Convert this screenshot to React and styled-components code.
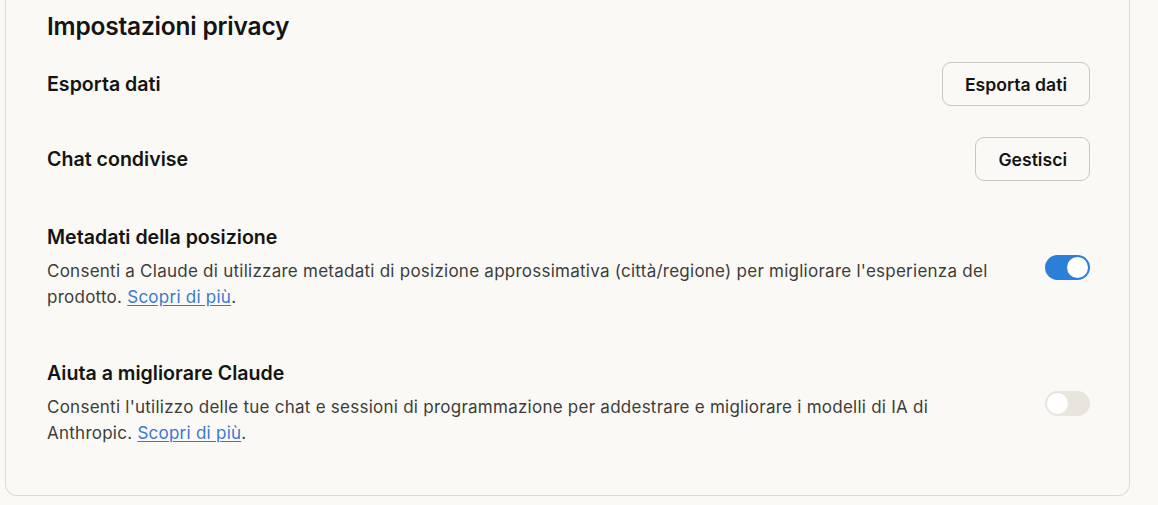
import styled, { createGlobalStyle } from 'styled-components';

const GlobalStyle = createGlobalStyle`
  body {
    margin: 0;
    background: #faf9f5;
    font-family: 'Inter', 'Noto Sans', sans-serif;
    color: #141413;
  }
`;

const Page = styled.div`
  padding: 0 28px 0 5px;
`;

const Card = styled.section`
  background: #faf9f5;
  border: 1px solid #dedcd4;
  border-top: none;
  border-radius: 0 0 12px 12px;
  padding: 12px 39px 49px 41px;
  display: flex;
  flex-direction: column;
`;

const Title = styled.h2`
  margin: 0;
  font-size: 24.5px;
  line-height: 28px;
  font-weight: 600;
  letter-spacing: -0.2px;
`;

const Row = styled.div`
  display: flex;
  align-items: center;
  justify-content: space-between;
  gap: 32px;
  margin-top: ${p => p.$top}px;
`;

const Label = styled.div`
  font-size: 19.6px;
  line-height: 24px;
  font-weight: 600;
`;

const Info = styled.div`
  flex: 1;
  display: flex;
  flex-direction: column;
  gap: 9px;
`;

const Desc = styled.p`
  margin: 0;
  font-size: 17px;
  letter-spacing: 0.25px;
  line-height: 26px;
  color: #3d3d3a;
`;

const Link = styled.a`
  color: #3a78cf;
  text-decoration: underline;
  text-underline-offset: 2px;
  cursor: pointer;
`;

const Button = styled.button`
  height: 44px;
  padding: 0 22px;
  border: 1px solid #c9c7bf;
  border-radius: 9px;
  background: transparent;
  font-family: inherit;
  font-size: 17.6px;
  font-weight: 600;
  color: #141413;
  cursor: pointer;
`;

const Track = styled.button`
  flex: none;
  width: 45px;
  height: 25px;
  padding: 2px;
  border: none;
  border-radius: 13px;
  background: ${p => (p.$on ? '#2c7fd8' : '#e8e6dc')};
  display: flex;
  justify-content: ${p => (p.$on ? 'flex-end' : 'flex-start')};
  cursor: pointer;
`;

const Knob = styled.span`
  width: 21px;
  height: 21px;
  border-radius: 50%;
  background: #ffffff;
`;

function Toggle({ on }) {
  return (
    <Track $on={on} role="switch" aria-checked={on}>
      <Knob />
    </Track>
  );
}

export default function App() {
  return (
    <>
      <GlobalStyle />
      <Page>
        <Card>
          <Title>Impostazioni privacy</Title>
          <Row $top={22}>
            <Label>Esporta dati</Label>
            <Button>Esporta dati</Button>
          </Row>
          <Row $top={31}>
            <Label>Chat condivise</Label>
            <Button>Gestisci</Button>
          </Row>
          <Row $top={44}>
            <Info>
              <Label>Metadati della posizione</Label>
              <Desc>
                Consenti a Claude di utilizzare metadati di posizione approssimativa (città/regione) per migliorare
                l'esperienza del prodotto. <Link>Scopri di più</Link>.
              </Desc>
            </Info>
            <Toggle on />
          </Row>
          <Row $top={51}>
            <Info>
              <Label>Aiuta a migliorare Claude</Label>
              <Desc>
                Consenti l'utilizzo delle tue chat e sessioni di programmazione per addestrare e migliorare i modelli
                di IA di Anthropic. <Link>Scopri di più</Link>.
              </Desc>
            </Info>
            <Toggle />
          </Row>
        </Card>
      </Page>
    </>
  );
}
